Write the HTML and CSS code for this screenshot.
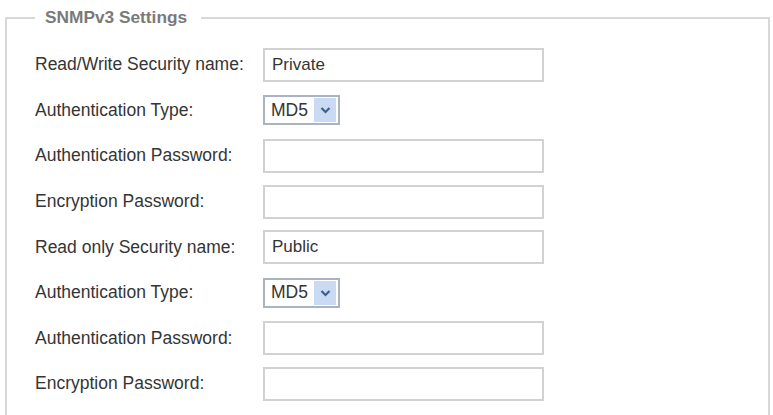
FILE: index.html
```html
<!DOCTYPE html>
<html lang="en">
<head>
    <meta charset="UTF-8">
    <title>SNMPv3 Settings</title>
    <link rel="stylesheet" href="styles.css">
</head>
<body>
    <fieldset class="settings">
        <legend>SNMPv3 Settings</legend>

        <div class="form-grid">
            <label for="rw-name">Read/Write Security name:</label>
            <input type="text" id="rw-name" class="field" value="Private">

            <label for="rw-auth">Authentication Type:</label>
            <div class="select" id="rw-auth">
                <span class="select-value">MD5</span>
                <span class="select-btn">
                    <svg width="11" height="8" viewBox="0 0 11 8"><path d="M1.5 2 L5.5 6 L9.5 2" fill="none" stroke="#3f5f8f" stroke-width="2.2"/></svg>
                </span>
            </div>

            <label for="rw-pass">Authentication Password:</label>
            <input type="password" id="rw-pass" class="field">

            <label for="rw-enc">Encryption Password:</label>
            <input type="password" id="rw-enc" class="field">

            <label for="ro-name">Read only Security name:</label>
            <input type="text" id="ro-name" class="field" value="Public">

            <label for="ro-auth">Authentication Type:</label>
            <div class="select" id="ro-auth">
                <span class="select-value">MD5</span>
                <span class="select-btn">
                    <svg width="11" height="8" viewBox="0 0 11 8"><path d="M1.5 2 L5.5 6 L9.5 2" fill="none" stroke="#3f5f8f" stroke-width="2.2"/></svg>
                </span>
            </div>

            <label for="ro-pass">Authentication Password:</label>
            <input type="password" id="ro-pass" class="field">

            <label for="ro-enc">Encryption Password:</label>
            <input type="password" id="ro-enc" class="field">
        </div>
    </fieldset>
</body>
</html>
```

FILE: styles.css
```css
:root {
    --text: #353535;
    --legend: #7a7a7a;
    --border: #d8d8d8;
    --field-border: #d2d2d2;
}

* {
    box-sizing: border-box;
}

body {
    margin: 0;
    background-color: #ffffff;
    font-family: "Liberation Sans", Arial, sans-serif;
    font-size: 17.5px;
    color: var(--text);
}

.settings {
    height: calc(100vh - 8px);
    margin: 8px 3px 0 5px;
    padding: 0 0 0 28px;
    border: 2px solid var(--border);
    border-bottom: none;
}

.settings legend {
    padding: 0 14px 0 10px;
    font-size: 17.3px;
    font-weight: 700;
    line-height: 19px;
    color: var(--legend);
}

.form-grid {
    display: grid;
    grid-template-columns: 228px 281px;
    grid-auto-rows: 45.6px;
    align-items: center;
    margin-top: 15px;
}

.form-grid label {
    white-space: nowrap;
}

.field {
    width: 281px;
    height: 34px;
    padding: 0 7px;
    border: 2px solid var(--field-border);
    font-family: inherit;
    font-size: 17px;
    color: var(--text);
    background-color: #ffffff;
    outline: none;
}

.select {
    display: flex;
    align-items: stretch;
    width: 77px;
    height: 30px;
    border: 2px solid #a9b3c2;
    background-color: #ffffff;
}

.select-value {
    flex: 1;
    display: flex;
    align-items: center;
    padding-left: 6px;
}

.select-btn {
    width: 22px;
    margin: 1px 2px 1px 0;
    display: flex;
    align-items: center;
    justify-content: center;
    background-color: #cbdaf3;
}
```
